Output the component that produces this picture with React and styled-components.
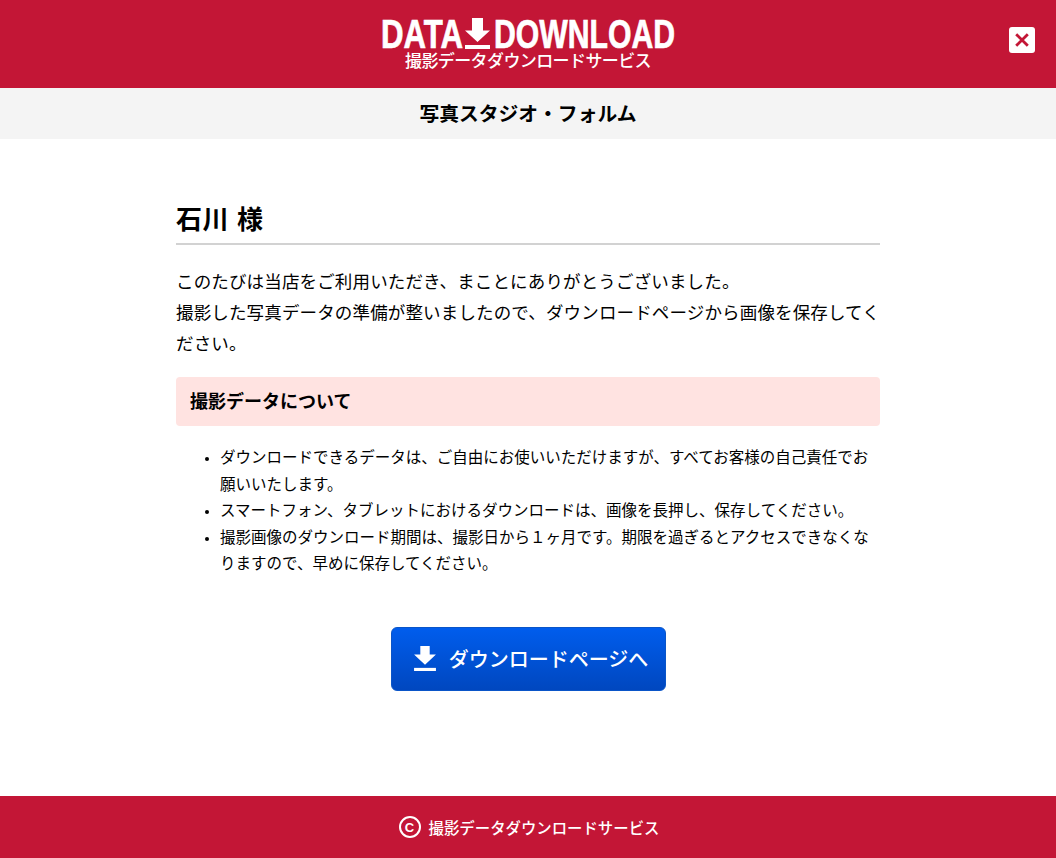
import React from 'react';
import styled, { createGlobalStyle } from 'styled-components';

const GlobalStyle = createGlobalStyle`
  html, body {
    margin: 0;
    padding: 0;
    background: #fff;
    color: #000;
    font-family: "Liberation Sans", "Noto Sans CJK JP", sans-serif;
  }
`;

const Page = styled.div`
  min-height: 858px;
  display: flex;
  flex-direction: column;
`;

const Header = styled.header`
  position: relative;
  height: 88px;
  background: #c31636;
  color: #fff;
  display: flex;
  flex-direction: column;
  align-items: center;
`;

const Logo = styled.div`
  display: flex;
  align-items: flex-start;
  height: 36px;
  margin-top: 16px;
  font-weight: 700;
  font-size: 40px;
  line-height: 36px;
`;

const LogoWord = styled.span`
  display: block;
  width: ${(p) => p.$width}px;
  white-space: nowrap;
  -webkit-text-stroke: 0.7px #fff;
  transform: scaleX(${(p) => p.$scale});
  transform-origin: left center;
`;

const LogoArrow = styled.svg`
  flex: none;
  width: 25px;
  height: 32px;
  margin: 2px 3.500px 0 2px;
  fill: #fff;
`;

const LogoSub = styled.div`
  font-size: 17px;
  line-height: 20px;
  letter-spacing: -0.6px;
  font-weight: 500;
`;

const CloseButton = styled.button`
  position: absolute;
  top: 27px;
  right: 21px;
  width: 26px;
  height: 26px;
  padding: 0;
  border: 0;
  border-radius: 3px;
  background: #fff;
  display: flex;
  align-items: center;
  justify-content: center;
`;

const ShopBar = styled.div`
  height: 51px;
  box-sizing: border-box;
  padding-bottom: 2px;
  background: #f4f4f4;
  display: flex;
  align-items: center;
  justify-content: center;
  font-size: 19.8px;
  font-weight: 700;
`;

const Main = styled.main`
  flex: 1;
  width: 704px;
  margin: 0 auto;
  padding-top: 64px;
`;

const Name = styled.h2`
  margin: 0;
  height: 40px;
  font-size: 26px;
  line-height: 35px;
  font-weight: 700;
  border-bottom: 2px solid #d2d2d2;
  letter-spacing: 0.6px;
`;

const Lead = styled.p`
  margin: 22px 0 0;
  font-size: 17.5px;
  line-height: 31px;
  letter-spacing: 0.15px;
`;

const NoticeTitle = styled.h3`
  margin: 17px 0 0;
  height: 49px;
  box-sizing: border-box;
  padding: 0 0 4px 14px;
  background: #ffe3e1;
  border-radius: 4px;
  display: flex;
  align-items: center;
  font-size: 18px;
  font-weight: 700;
`;

const Notes = styled.ul`
  margin: 19px 0 0;
  padding: 0 0 0 44px;
  font-size: 15.5px;
  line-height: 26.6px;
  li::marker {
    font-size: 13px;
  }
`;

const DownloadWrap = styled.div`
  display: flex;
  justify-content: center;
  margin-top: 49px;
`;

const DownloadButton = styled.a`
  width: 275px;
  height: 64px;
  box-sizing: border-box;
  padding-left: 6px;
  border-radius: 6px;
  border: 1px solid #0a55c8;
  background: linear-gradient(to bottom, #005ded, #0047bf);
  color: #fff;
  display: flex;
  align-items: center;
  justify-content: center;
  gap: 13px;
  font-size: 20px;
  font-weight: 500;
`;

const Footer = styled.footer`
  height: 62px;
  box-sizing: border-box;
  padding-left: 2px;
  background: #c31636;
  color: #fff;
  display: flex;
  align-items: center;
  justify-content: center;
  gap: 8px;
  font-size: 15.4px;
  font-weight: 500;
`;

const Copy = styled.span`
  width: 22px;
  height: 22px;
  box-sizing: border-box;
  border: 2.5px solid #fff;
  border-radius: 50%;
  display: flex;
  align-items: center;
  justify-content: center;
  font-size: 13px;
  font-weight: 700;
`;

export default function App() {
  return (
    <Page>
      <GlobalStyle />
      <Header>
        <Logo>
          <LogoWord $width={82} $scale={0.78}>DATA</LogoWord>
          <LogoArrow viewBox="0 0 25 32">
            <path d="M7 0h11v12.500h7L12.500 24 0 12.500h7z" />
            <rect x="0" y="27" width="25" height="4" />
          </LogoArrow>
          <LogoWord $width={181} $scale={0.755}>DOWNLOAD</LogoWord>
        </Logo>
        <LogoSub>撮影データダウンロードサービス</LogoSub>
        <CloseButton aria-label="閉じる">
          <svg width="16" height="16" viewBox="0 0 16 16">
            <path d="M2.200 2.200l11.600 11.600M13.800 2.200L2.200 13.800" stroke="#c31636" strokeWidth="2.8" fill="none" />
          </svg>
        </CloseButton>
      </Header>
      <ShopBar>写真スタジオ・フォルム</ShopBar>
      <Main>
        <Name>石川 様</Name>
        <Lead>
          このたびは当店をご利用いただき、まことにありがとうございました。<br />
          撮影した写真データの準備が整いましたので、ダウンロードページから画像を保存してください。
        </Lead>
        <NoticeTitle>撮影データについて</NoticeTitle>
        <Notes>
          <li>ダウンロードできるデータは、ご自由にお使いいただけますが、すべてお客様の自己責任でお願いいたします。</li>
          <li>スマートフォン、タブレットにおけるダウンロードは、画像を長押し、保存してください。</li>
          <li>撮影画像のダウンロード期間は、撮影日から１ヶ月です。期限を過ぎるとアクセスできなくなりますので、早めに保存してください。</li>
        </Notes>
        <DownloadWrap>
          <DownloadButton>
            <svg width="22" height="25" viewBox="0 0 28 32" fill="#fff">
              <path d="M8 0h12v11h8L14 24 0 11h8z" />
              <rect x="0" y="28" width="28" height="4" />
            </svg>
            ダウンロードページへ
          </DownloadButton>
        </DownloadWrap>
      </Main>
      <Footer>
        <Copy>C</Copy>
        撮影データダウンロードサービス
      </Footer>
    </Page>
  );
}
